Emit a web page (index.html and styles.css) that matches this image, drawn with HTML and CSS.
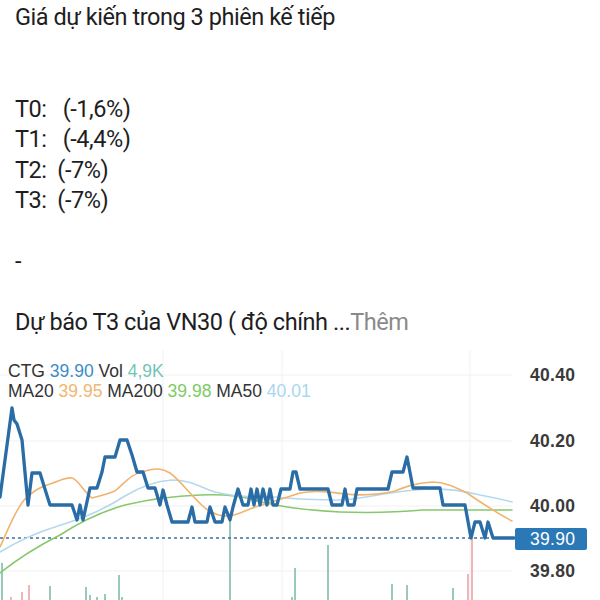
FILE: index.html
```html
<!DOCTYPE html>
<html lang="vi">
<head>
<meta charset="utf-8">
<link rel="stylesheet" href="styles.css">
</head>
<body>
<div class="post">
  <div class="line">Giá dự kiến trong 3 phiên kế tiếp</div>
  <div class="line"></div>
  <div class="line"></div>
  <div class="line">T0:   (-1,6%)</div>
  <div class="line">T1:   (-4,4%)</div>
  <div class="line">T2:  (-7%)</div>
  <div class="line">T3:  (-7%)</div>
  <div class="line"></div>
  <div class="line">-</div>
  <div class="line"></div>
  <div class="line">Dự báo T3 của VN30 ( độ chính ...<span class="more">Thêm</span></div>
</div>
<div class="chart">
  <svg class="plot" width="600" height="250" viewBox="0 350 600 250">
    <g class="grid">
      <line x1="0" y1="375" x2="512" y2="375"/>
      <line x1="0" y1="441" x2="512" y2="441"/>
      <line x1="0" y1="506" x2="512" y2="506"/>
      <line x1="0" y1="571" x2="512" y2="571"/>
      <line x1="163" y1="350" x2="163" y2="600"/>
      <line x1="282" y1="350" x2="282" y2="600"/>
      <line x1="470" y1="350" x2="470" y2="600"/>
    </g>
    <g class="vol-up">
      <line x1="2" y1="563" x2="2" y2="600"/>
      <line x1="50" y1="586" x2="50" y2="600"/>
      <line x1="86" y1="587" x2="86" y2="600"/>
      <line x1="90" y1="595" x2="90" y2="600"/>
      <line x1="97" y1="597" x2="97" y2="600"/>
      <line x1="105" y1="594" x2="105" y2="600"/>
      <line x1="119" y1="575" x2="119" y2="600"/>
      <line x1="122" y1="597" x2="122" y2="600"/>
      <line x1="230" y1="520" x2="230" y2="600"/>
      <line x1="292" y1="597" x2="292" y2="600"/>
      <line x1="295" y1="568" x2="295" y2="600"/>
      <line x1="328" y1="545" x2="328" y2="600"/>
      <line x1="392" y1="584" x2="392" y2="600"/>
      <line x1="407" y1="585" x2="407" y2="600"/>
      <line x1="453" y1="588" x2="453" y2="600"/>
    </g>
    <g class="vol-down">
      <line x1="11" y1="597" x2="11" y2="600"/>
      <line x1="22" y1="592" x2="22" y2="600"/>
      <line x1="29" y1="585" x2="29" y2="600"/>
      <line x1="468" y1="574" x2="468" y2="600"/>
      <line x1="472" y1="538" x2="472" y2="600"/>
    </g>
    <line class="last" x1="0" y1="538" x2="515" y2="538"/>
    <path class="ma200" d="M0,573 C20,557 40,545 60,535 C80,522 100,512 125,505 C150,499 175,496 200,495 C225,494 245,496 260,502 C280,506 300,510 340,512 C370,513 390,513 423,510 C450,510 480,510 512,510"/>
    <path class="ma50" d="M0,552 C15,543 35,533 55,527 C80,519 100,512 125,496 C140,487 155,481 172,480 C190,480 200,487 215,492 C235,497 255,497 275,497 C300,500 320,500 345,500 C370,497 390,492 415,490 C440,487 460,490 480,495 C495,498 505,500 512,502"/>
    <path class="ma20" d="M0,547 C8,530 15,510 25,499 C35,490 40,487 50,484 C60,481 65,477 72,478 C78,479 82,490 92,498 C100,496 108,494 115,491 C125,483 130,474 145,471 C155,468 162,468 170,473 C180,480 190,495 205,508 C212,513 220,517 230,516 C240,514 250,508 262,505 C275,501 285,498 300,493 C315,490 330,492 345,494 C365,496 378,495 395,491 C405,487 415,483 432,482 C445,482 455,487 467,493 C480,502 495,512 512,521"/>
    <path class="price" d="M0,497 L12,408 L14,420 L17,424 L22,440 L28,505 L32,473 L40,473 L44,486 L50,505 L72,505 L77,520 L80,505 L83,520 L90,488 L97,488 L102,472 L105,457 L115,457 L120,440 L127,440 L132,455 L137,472 L143,472 L148,488 L155,488 L160,505 L163,490 L167,505 L172,522 L188,522 L192,507 L195,522 L207,522 L210,507 L215,522 L222,522 L225,507 L230,520 L233,507 L238,489 L243,505 L248,505 L251,489 L254,505 L257,489 L260,505 L263,489 L267,505 L270,489 L273,505 L277,505 L281,489 L290,489 L293,472 L296,472 L300,489 L328,489 L332,505 L342,505 L345,489 L348,505 L354,505 L357,489 L388,489 L392,472 L403,472 L407,457 L413,488 L440,488 L443,505 L465,505 L471,538 L475,522 L480,522 L485,538 L488,522 L493,538 L514,538"/>
    <g class="axis">
      <text x="530" y="381">40.40</text>
      <text x="530" y="447">40.20</text>
      <text x="530" y="512">40.00</text>
      <text x="530" y="577">39.80</text>
    </g>
    <rect class="tag" x="515" y="528" width="72" height="22" rx="2"/>
    <text class="tag-text" x="530" y="545">39.90</text>
  </svg>
  <div class="legend">
    <div class="legend-row"><span class="k">CTG</span> <span class="c-price">39.90</span> <span class="k">Vol</span> <span class="c-vol">4,9K</span></div>
    <div class="legend-row"><span class="k">MA20</span> <span class="c-ma20">39.95</span> <span class="k">MA200</span> <span class="c-ma200">39.98</span> <span class="k">MA50</span> <span class="c-ma50">40.01</span></div>
  </div>
</div>
</body>
</html>
```
FILE: styles.css
```css
html, body {
  margin: 0;
  padding: 0;
  background: #ffffff;
}
body {
  width: 600px;
  height: 600px;
  overflow: hidden;
}
.post {
  padding: 2px 0 0 15px;
  font-family: Roboto, "Noto Sans", sans-serif;
  font-size: 23.5px;
  letter-spacing: -0.45px;
  line-height: 30.5px;
  color: #1e1e1e;
}
.line {
  height: 30.5px;
  white-space: pre;
}
.more {
  color: #8a8a8a;
}
.chart {
  display: grid;
  margin-top: 12px;
  height: 250px;
}
.chart > * {
  grid-area: 1 / 1;
}
.plot {
  display: block;
}
.grid line {
  stroke: #f1f1f1;
  stroke-width: 1;
}
.vol-up line {
  stroke: #7fbcae;
  stroke-width: 1.6;
}
.vol-down line {
  stroke: #eba3a8;
  stroke-width: 1.6;
}
.last {
  stroke: #3f6f96;
  stroke-width: 1.5;
  stroke-dasharray: 3 3;
}
.price, .ma20, .ma50, .ma200 {
  fill: none;
  stroke-linejoin: round;
  stroke-linecap: round;
}
.price {
  stroke: #2a6ca5;
  stroke-width: 3.3;
}
.ma20 {
  stroke: #f0b46e;
  stroke-width: 1.6;
}
.ma50 {
  stroke: #b4d9ef;
  stroke-width: 1.6;
}
.ma200 {
  stroke: #86c86c;
  stroke-width: 1.6;
}
.axis text {
  font-family: "Liberation Sans", Arial, sans-serif;
  font-size: 17.5px;
  font-weight: 700;
  fill: #3a3a3a;
  letter-spacing: 0.3px;
}
.tag {
  fill: #2b78b6;
}
.tag-text {
  font-family: "Liberation Sans", Arial, sans-serif;
  font-size: 17.5px;
  font-weight: 400;
  fill: #ffffff;
  letter-spacing: 0.3px;
}
.legend {
  align-self: start;
  padding: 11px 0 0 8px;
  font-family: "Liberation Sans", Arial, sans-serif;
  font-size: 17.5px;
  line-height: 20px;
  color: #333333;
}
.legend-row {
  white-space: nowrap;
}
.c-price { color: #3d8cc6; }
.c-vol { color: #72c4b8; }
.c-ma20 { color: #f2b66f; }
.c-ma200 { color: #7ccb65; }
.c-ma50 { color: #a9d6ee; }
```
